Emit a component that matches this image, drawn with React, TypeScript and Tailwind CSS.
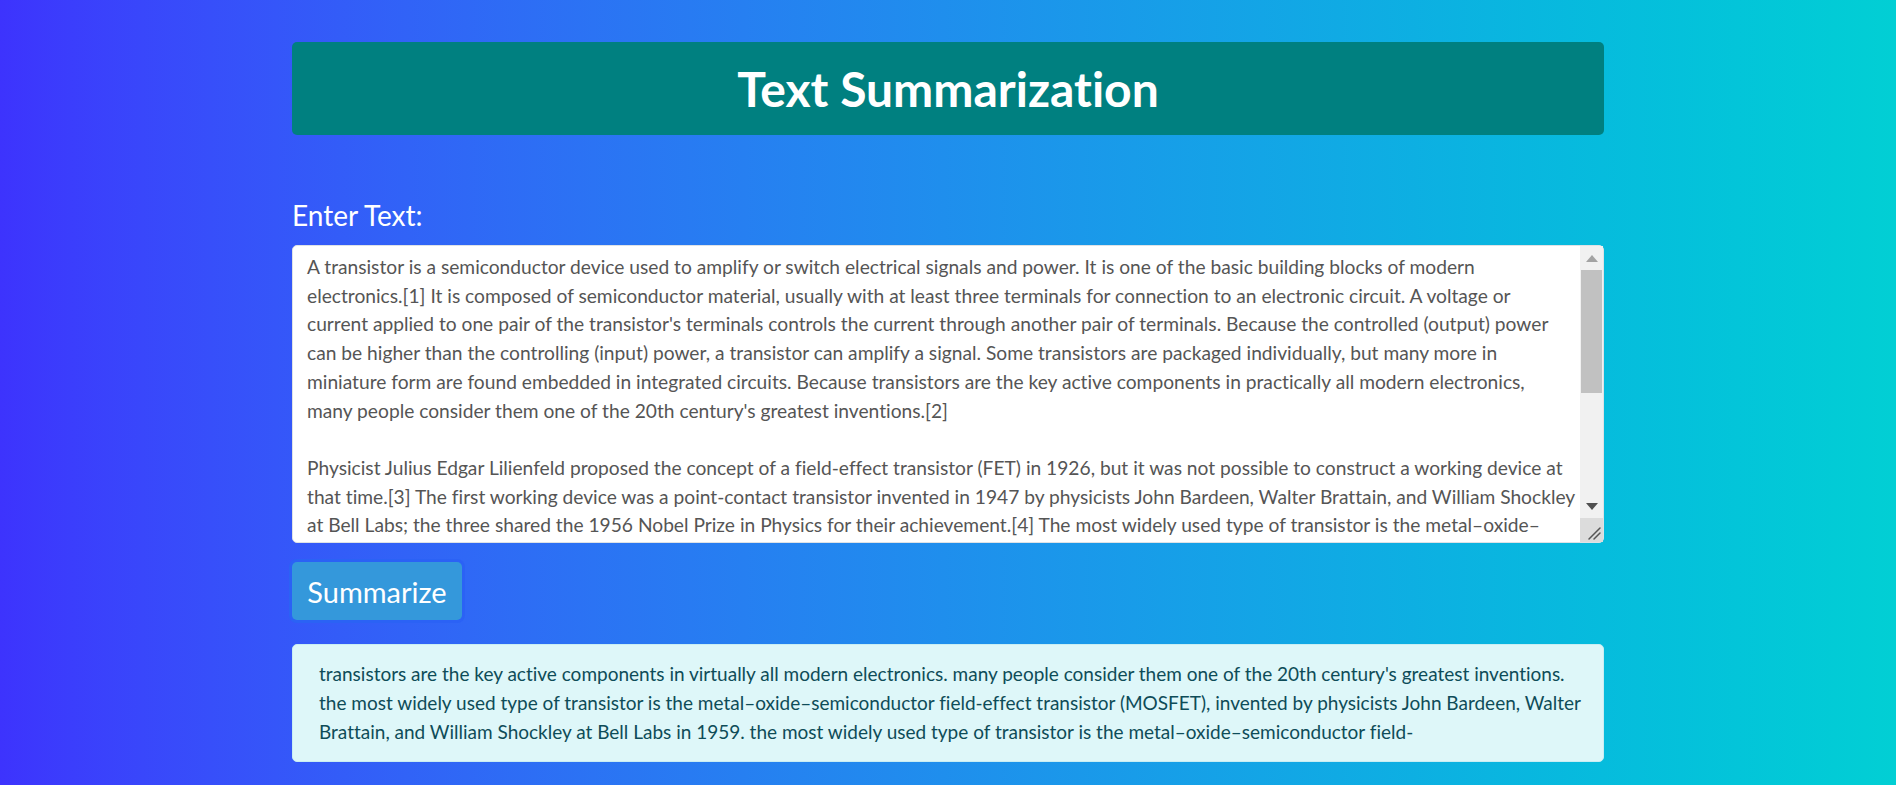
const sourceLines = [
  "A transistor is a semiconductor device used to amplify or switch electrical signals and power. It is one of the basic building blocks of modern",
  "electronics.[1] It is composed of semiconductor material, usually with at least three terminals for connection to an electronic circuit. A voltage or",
  "current applied to one pair of the transistor's terminals controls the current through another pair of terminals. Because the controlled (output) power",
  "can be higher than the controlling (input) power, a transistor can amplify a signal. Some transistors are packaged individually, but many more in",
  "miniature form are found embedded in integrated circuits. Because transistors are the key active components in practically all modern electronics,",
  "many people consider them one of the 20th century's greatest inventions.[2]",
  "",
  "Physicist Julius Edgar Lilienfeld proposed the concept of a field-effect transistor (FET) in 1926, but it was not possible to construct a working device at",
  "that time.[3] The first working device was a point-contact transistor invented in 1947 by physicists John Bardeen, Walter Brattain, and William Shockley",
  "at Bell Labs; the three shared the 1956 Nobel Prize in Physics for their achievement.[4] The most widely used type of transistor is the metal–oxide–",
  "semiconductor field-effect transistor (MOSFET), invented by Mohamed Atalla and Dawon Kahng at Bell Labs in 1959.[5][6][7] Transistors revolutionized",
  "the field of electronics, and paved the way for smaller and cheaper radios, calculators, and computers, among other things.",
  "",
  "Most transistors are made from very pure silicon, and some from germanium, but certain other semiconductor materials are sometimes used. A transistor",
  "may have only one kind of charge carrier, in a field-effect transistor, or may have two kinds of charge carriers in bipolar junction transistor devices.",
  "Compared with the vacuum tube, transistors are generally smaller and require less power to operate. Certain vacuum tubes have advantages over",
  "transistors at very high operating frequencies or high operating voltages. Many types of transistors are made to standardized specifications by",
  "multiple manufacturers.",
  "",
];

const summaryLines = [
  "transistors are the key active components in virtually all modern electronics. many people consider them one of the 20th century's greatest inventions.",
  "the most widely used type of transistor is the metal–oxide–semiconductor field-effect transistor (MOSFET), invented by physicists John Bardeen, Walter",
  "Brattain, and William Shockley at Bell Labs in 1959. the most widely used type of transistor is the metal–oxide–semiconductor field-",
];

// headless chrome hides native scrollbars, so draw the classic one over the textarea
const FakeScrollbar = () => (
  <div className="pointer-events-none absolute right-[1px] top-[1px] bottom-[1px] flex w-[23px] flex-col bg-[#f1f1f1]">
    <div className="flex h-[24px] items-center justify-center">
      <svg width="12" height="7" viewBox="0 0 12 7">
        <path d="M6 0 L12 7 L0 7 Z" fill="#a3a3a3" />
      </svg>
    </div>
    <div className="mx-[1px] h-[123px] bg-[#c1c1c1]" />
    <div className="flex-1" />
    <div className="flex h-[24px] items-center justify-center">
      <svg width="12" height="7" viewBox="0 0 12 7">
        <path d="M0 0 L12 0 L6 7 Z" fill="#505050" />
      </svg>
    </div>
    <div className="flex h-[24px] items-end justify-end bg-[#dcdcdc] pb-[2px] pr-[2px]">
      <svg width="14" height="14" viewBox="0 0 14 14">
        <path d="M2 13 L13 2 M7 13 L13 7" stroke="#555555" strokeWidth="1.5" strokeLinecap="round" />
      </svg>
    </div>
  </div>
);

export default function App() {
  return (
    <div className="min-h-[785px] w-full bg-gradient-to-r from-[#3d33fd] to-[#02cfd4] font-['Lato','Open_Sans',sans-serif] [font-variant-ligatures:none]">
      <div className="mx-auto w-[1312px] pt-[42px]">
        <div className="flex h-[93px] items-center justify-center rounded-[5px] bg-[#008080]">
          <h1 className="text-[48px] font-bold leading-none text-white">Text Summarization</h1>
        </div>

        <label className="mt-[61px] block text-[28px] leading-[38px] text-white">Enter Text:</label>

        <div className="relative mt-[11px]">
          <textarea
            className="block h-[298px] w-full resize-none overflow-hidden whitespace-pre rounded-[5px] border border-[#dee2e6] bg-white pl-[14px] pr-[40px] pt-[7px] text-[19.2px] leading-[28.7px] text-[#555555] outline-none [font-variant-ligatures:none]"
            wrap="off"
            defaultValue={sourceLines.join("\n")}
          />
          <FakeScrollbar />
        </div>

        <button className="mt-[19px] block h-[58px] w-[170px] rounded-[5px] bg-[#3498db] text-[29px] leading-none text-white shadow-[0_0_0_3px_#2b62f5]">
          Summarize
        </button>

        <div className="mt-[24px] rounded-[5px] border border-[#c9eef3] bg-[#def7f9] pl-[26px] pr-4 pt-[14px] pb-[15px] text-[19px] leading-[29px] text-[#0e4c58]">
          {summaryLines.map((line, i) => (
            <div key={i} className="whitespace-pre">
              {line}
            </div>
          ))}
        </div>
      </div>
    </div>
  );
}
